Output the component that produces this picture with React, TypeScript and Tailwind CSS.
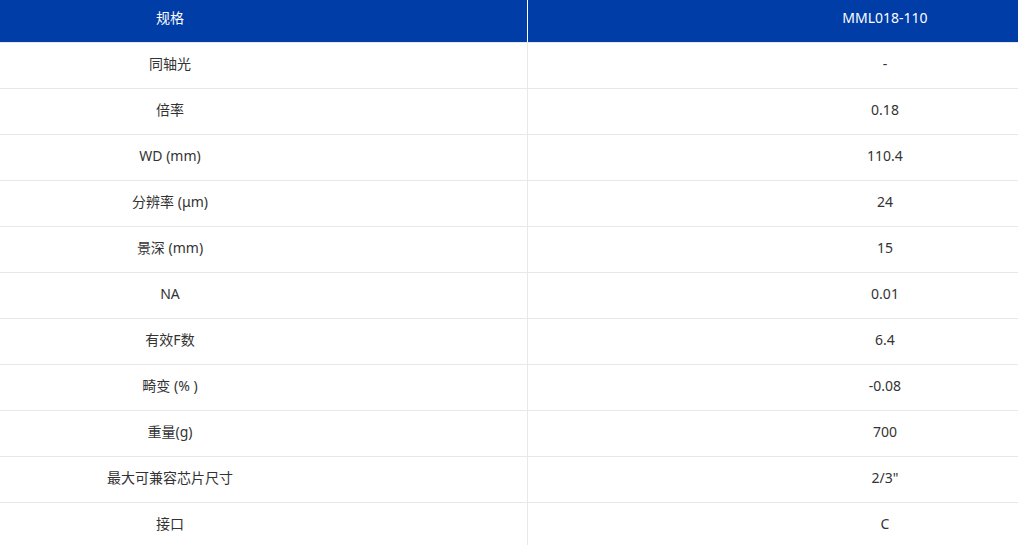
import React from "react";

const rows: [string, string][] = [
  ["同轴光", "-"],
  ["倍率", "0.18"],
  ["WD (mm)", "110.4"],
  ["分辨率 (μm)", "24"],
  ["景深 (mm)", "15"],
  ["NA", "0.01"],
  ["有效F数", "6.4"],
  ["畸变 (% )", "-0.08"],
  ["重量(g)", "700"],
  ["最大可兼容芯片尺寸", "2/3\""],
  ["接口", "C"],
];

export default function App() {
  return (
    <div
      className="w-[1018px] h-[545px] overflow-hidden bg-white text-[14px] text-[#333]"
      style={{ fontFamily: '"Noto Sans", "Noto Sans CJK SC", sans-serif' }}
    >
      <div className="flex h-[43px] bg-[#003da6] text-white border-b border-[#e8e8e8]">
        <div className="w-[528px] shrink-0 border-r border-white flex items-center pb-[8px]">
          <div className="w-[340px] text-center">规格</div>
        </div>
        <div className="flex-1 overflow-hidden flex items-center pb-[8px]">
          <div className="w-[714px] shrink-0 text-center">MML018-110</div>
        </div>
      </div>
      {rows.map(([k, v]) => (
        <div key={k} className="flex h-[46px] border-b border-[#e8e8e8]">
          <div className="w-[528px] shrink-0 border-r border-[#e8e8e8] flex items-center pb-[4px]">
            <div className="w-[340px] text-center">{k}</div>
          </div>
          <div className="flex-1 overflow-hidden flex items-center pb-[4px]">
            <div className="w-[714px] shrink-0 text-center">{v}</div>
          </div>
        </div>
      ))}
    </div>
  );
}
